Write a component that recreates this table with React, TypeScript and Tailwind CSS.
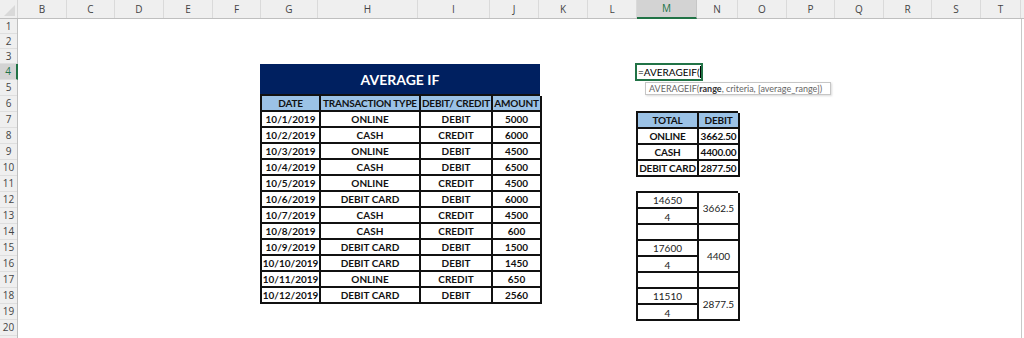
import React from "react";

const COLS =
  "grid-cols-[49px_48px_49px_49px_48px_57px_100px_72px_49px_49px_49px_60px_41px_49px_48px_49px_48px_49px_40px]";
const LETTERS = ["B", "C", "D", "E", "F", "G", "H", "I", "J", "K", "L", "M", "N", "O", "P", "Q", "R", "S", "T"];

const rows = [
  ["10/1/2019", "ONLINE", "DEBIT", "5000"],
  ["10/2/2019", "CASH", "CREDIT", "6000"],
  ["10/3/2019", "ONLINE", "DEBIT", "4500"],
  ["10/4/2019", "CASH", "DEBIT", "6500"],
  ["10/5/2019", "ONLINE", "CREDIT", "4500"],
  ["10/6/2019", "DEBIT CARD", "DEBIT", "6000"],
  ["10/7/2019", "CASH", "CREDIT", "4500"],
  ["10/8/2019", "CASH", "CREDIT", "600"],
  ["10/9/2019", "DEBIT CARD", "DEBIT", "1500"],
  ["10/10/2019", "DEBIT CARD", "DEBIT", "1450"],
  ["10/11/2019", "ONLINE", "CREDIT", "650"],
  ["10/12/2019", "DEBIT CARD", "DEBIT", "2560"],
];

const summary = [
  ["ONLINE", "3662.50"],
  ["CASH", "4400.00"],
  ["DEBIT CARD", "2877.50"],
];

const groups = [
  ["14650", "4", "3662.5"],
  ["17600", "4", "4400"],
  ["11510", "4", "2877.5"],
];

const cell = "flex items-center justify-center border-r-2 border-b-2 border-[#111] h-[16px] leading-none";

function MainTable() {
  return (
    <div className="col-[6/10] row-[4/19] flex flex-col -ml-[1px] w-[280px]">
      <div className="h-[32px] bg-[#002060] flex items-center justify-center text-white font-bold text-[14px] pb-[2px]">
        AVERAGE IF
      </div>
      <div className="-mt-[2px] grid grid-cols-[59px_100px_72px_49px] border-l-2 border-t-2 border-[#111] text-[10px] font-bold text-[#111]">
        {["DATE", "TRANSACTION TYPE", "DEBIT/ CREDIT", "AMOUNT"].map((h) => (
          <div key={h} className={`${cell} bg-[#9bc2e6] tracking-[-0.2px]`}>
            {h}
          </div>
        ))}
        {rows.map((r) =>
          r.map((v, i) => (
            <div key={r[0] + i} className={cell}>
              {v}
            </div>
          ))
        )}
      </div>
    </div>
  );
}

function SummaryTable() {
  return (
    <div className="col-[12/14] row-[7/11] -mt-[1px] -ml-[1px]">
      <div className="grid grid-cols-[61px_41px] border-l-2 border-t-2 border-[#111] text-[10px] font-bold text-[#111] tracking-[-0.2px]">
        <div className={`${cell} bg-[#9bc2e6]`}>TOTAL</div>
        <div className={`${cell} bg-[#9bc2e6]`}>DEBIT</div>
        {summary.map(([a, b]) => (
          <React.Fragment key={a}>
            <div className={cell}>{a}</div>
            <div className={cell}>{b}</div>
          </React.Fragment>
        ))}
      </div>
    </div>
  );
}

function CalcTable() {
  return (
    <div className="col-[12/14] row-[12/20] -mt-[1px] -ml-[1px]">
      <div className="grid grid-cols-[61px_41px] border-l-2 border-t-2 border-[#111] text-[10px] text-[#222]">
        {groups.map(([sum, count, avg], gi) => (
          <React.Fragment key={sum}>
            <div className="flex flex-col">
              <div className={`${cell} items-start pt-[2px]`}>{sum}</div>
              <div className={`${cell} items-start pt-[3px]`}>{count}</div>
            </div>
            <div className="flex items-center justify-center border-r-2 border-b-2 border-[#111] h-[32px]">{avg}</div>
            {gi < 2 && (
              <>
                <div className={cell}></div>
                <div className={cell}></div>
              </>
            )}
          </React.Fragment>
        ))}
      </div>
    </div>
  );
}

function ActiveCell() {
  return (
    <div className="col-[12/13] row-[4/5] relative">
      <div className="absolute -left-[2px] -top-[1px] w-[68px] h-[18px] border-2 border-[#217346] bg-white flex items-center pl-[1px] text-[10px] text-black whitespace-nowrap">
        <span>=AVERAGEIF(</span>
        <span className="shrink-0 w-px h-[12px] bg-black" />
      </div>
      <div className="absolute left-[8px] top-[18px] w-[186px] h-[13px] border border-[#c6c6c6] bg-white shadow-[1px_1px_2px_rgba(0,0,0,0.15)] flex items-center pl-[3px] text-[9px] text-[#666] whitespace-nowrap leading-none">
        AVERAGEIF(<span className="font-bold text-[#333]">range</span>, criteria, [average_range])
      </div>
    </div>
  );
}

export default function App() {
  const rowNums = Array.from({ length: 20 }, (_, i) => i + 1);
  return (
    <div className="w-[1024px] h-[338px] overflow-hidden bg-white flex flex-col font-['Lato',sans-serif]">
      <div className="flex h-[19px] shrink-0 bg-[#efefef] border-b border-[#bfbfbf] font-['Open_Sans',sans-serif] text-[10px] text-[#444]">
        <div className="w-[18px] shrink-0 border-r border-[#d6d6d6] flex items-end justify-end pr-[2px] pb-[2px]">
          <svg width="11" height="11" viewBox="0 0 11 11">
            <polygon points="11,0 11,11 0,11" fill="#d9d9d9" />
          </svg>
        </div>
        <div className={`grid ${COLS}`}>
          {LETTERS.map((l) =>
            l === "M" ? (
              <div key={l} className="flex items-center justify-center bg-[#d3d3d3] border-r border-[#c6c6c6] border-b-2 border-b-[#217346] text-[#217346] -mb-[1px]">
                {l}
              </div>
            ) : (
              <div key={l} className="flex items-center justify-center border-r border-[#dadada]">
                {l}
              </div>
            )
          )}
        </div>
      </div>
      <div className="flex flex-1">
        <div className="w-[18px] shrink-0 flex flex-col bg-[#efefef] border-r border-[#bfbfbf] font-['Open_Sans',sans-serif] text-[10px] text-[#444]">
          {rowNums.map((n) => (
            <div
              key={n}
              className={`${n <= 3 ? "h-[15px]" : "h-[16px]"} shrink-0 flex items-center justify-center border-b border-[#dedede] ${
                n === 4 ? "bg-[#d3d3d3] text-[#217346] border-r-2 border-r-[#217346] -mr-[1px]" : ""
              }`}
            >
              {n}
            </div>
          ))}
        </div>
        <div className={`grid ${COLS} grid-rows-[15px_15px_15px_repeat(18,16px)] border-r border-[#c8c8c8]`}>
          <MainTable />
          <ActiveCell />
          <SummaryTable />
          <CalcTable />
        </div>
      </div>
    </div>
  );
}
